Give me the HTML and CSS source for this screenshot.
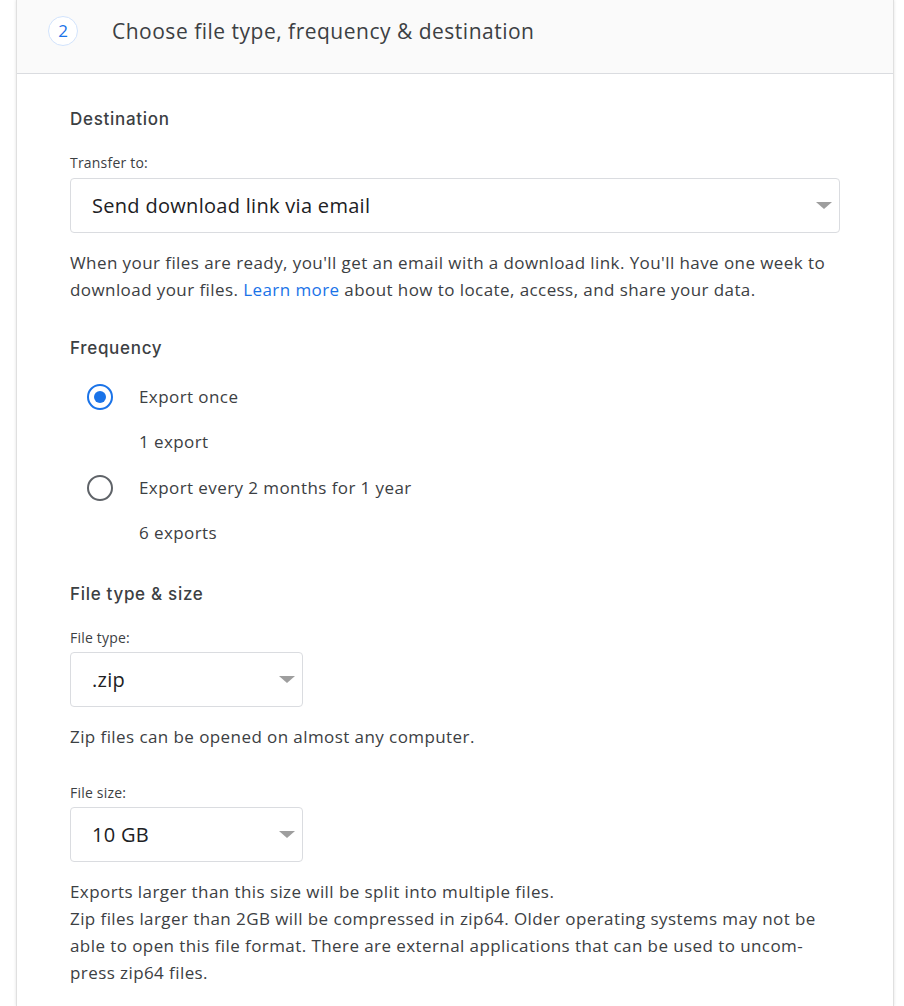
FILE: index.html
```html
<!DOCTYPE html>
<html>
<head>
<meta charset="utf-8">
<link rel="stylesheet" href="styles.css">
</head>
<body>
<div class="card">
  <div class="card-head">
    <span class="step">2</span>
    <h2 class="title">Choose file type, frequency &amp; destination</h2>
  </div>
  <div class="card-body">
    <h3 class="section">Destination</h3>
    <div class="label">Transfer to:</div>
    <div class="select wide">
      <span class="select-text">Send download link via email</span>
      <span class="caret"></span>
    </div>
    <p class="desc">When your files are ready, you'll get an email with a download link. You'll have one week to download your files. <a class="link" href="#">Learn more</a> about how to locate, access, and share your data.</p>

    <h3 class="section sec-freq">Frequency</h3>
    <div class="radios">
      <div class="radio-row">
        <span class="radio checked"><span class="dot"></span></span>
        <span class="radio-label">Export once</span>
      </div>
      <div class="radio-sub">1 export</div>
      <div class="radio-row">
        <span class="radio"></span>
        <span class="radio-label">Export every 2 months for 1 year</span>
      </div>
      <div class="radio-sub">6 exports</div>
    </div>

    <h3 class="section sec-type">File type &amp; size</h3>
    <div class="label">File type:</div>
    <div class="select narrow">
      <span class="select-text">.zip</span>
      <span class="caret"></span>
    </div>
    <p class="desc">Zip files can be opened on almost any computer.</p>

    <div class="label label-size">File size:</div>
    <div class="select narrow">
      <span class="select-text">10 GB</span>
      <span class="caret"></span>
    </div>
    <p class="desc">Exports larger than this size will be split into multiple files.<br>Zip files larger than 2GB will be compressed in zip64. Older operating systems may not be able to open this file format. There are external applications that can be used to uncom&shy;press zip64 files.</p>
  </div>
</div>
</body>
</html>
```
FILE: styles.css
```css
* { box-sizing: border-box; }
html, body { margin: 0; padding: 0; background: #fff; }
body {
  font-family: "Open Sans", Roboto, sans-serif;
  color: #3c4043;
  height: 1006px;
  overflow: hidden;
}
.card {
  margin-left: 16px;
  width: 878px;
  background: #fff;
  border-left: 1px solid #e0e0e0;
  border-right: 1px solid #e0e0e0;
  box-shadow: 0 0 3px rgba(0,0,0,0.12);
  min-height: 1006px;
}
.card-head {
  height: 74px;
  background: #fafafa;
  border-bottom: 1px solid #dadce0;
  display: flex;
  align-items: center;
  padding-left: 31px;
  padding-bottom: 12px;
}
.step {
  width: 30px;
  height: 30px;
  border-radius: 50%;
  border: 1px solid #d2e3fc;
  color: #1a73e8;
  font-size: 17px;
  display: flex;
  align-items: center;
  justify-content: center;
  background: #fff;
}
.title {
  margin: 0 0 0 34px;
  font-size: 21px;
  letter-spacing: 0.5px;
  font-weight: 400;
  color: #3c4043;
}
.card-body {
  padding: 34px 54px 0 53px;
}
.section {
  margin: 0;
  font-family: Inter, "Open Sans", sans-serif;
  font-size: 17px;
  font-weight: 500;
  letter-spacing: 0.7px;
  line-height: 22px;
  color: #3c4043;
}
.label {
  margin-top: 25px;
  font-size: 14px;
  letter-spacing: 0.2px;
  line-height: 16px;
  color: #3c4043;
}
.select {
  margin-top: 7px;
  height: 55px;
  border: 1px solid #dadce0;
  border-radius: 4px;
  display: flex;
  align-items: center;
  justify-content: space-between;
  padding: 0 7px 0 21px;
}
.wide { width: 770px; }
.narrow { width: 233px; margin-top: 6px; }
.select-text {
  font-size: 20px;
  letter-spacing: 0.3px;
  color: #202124;
}
.caret {
  width: 0;
  height: 0;
  border-left: 8px solid transparent;
  border-right: 8px solid transparent;
  border-top: 7px solid #9e9e9e;
}
.desc {
  margin: 16px 0 0;
  font-size: 17px;
  letter-spacing: 0.42px;
  line-height: 27px;
  color: #3c4043;
}
.link { color: #1a73e8; text-decoration: none; }
.sec-freq { margin-top: 34px; }
.radios { padding-left: 17px; margin-top: 14px; }
.radio-row {
  display: flex;
  align-items: center;
  height: 47px;
}
.radio {
  width: 26px;
  height: 26px;
  border-radius: 50%;
  border: 2px solid #5f6368;
  display: flex;
  align-items: center;
  justify-content: center;
  flex: none;
}
.radio.checked { border-color: #1a73e8; }
.dot { width: 12px; height: 12px; border-radius: 50%; background: #1a73e8; }
.radio-label {
  margin-left: 26px;
  font-size: 17px;
  letter-spacing: 0.42px;
  color: #3c4043;
}
.radio-sub {
  padding-left: 52px;
  font-size: 17px;
  letter-spacing: 0.42px;
  height: 44px;
  line-height: 44px;
  color: #3c4043;
}
.sec-type { margin-top: 28px; }
.label-size { margin-top: 35px; }
```
